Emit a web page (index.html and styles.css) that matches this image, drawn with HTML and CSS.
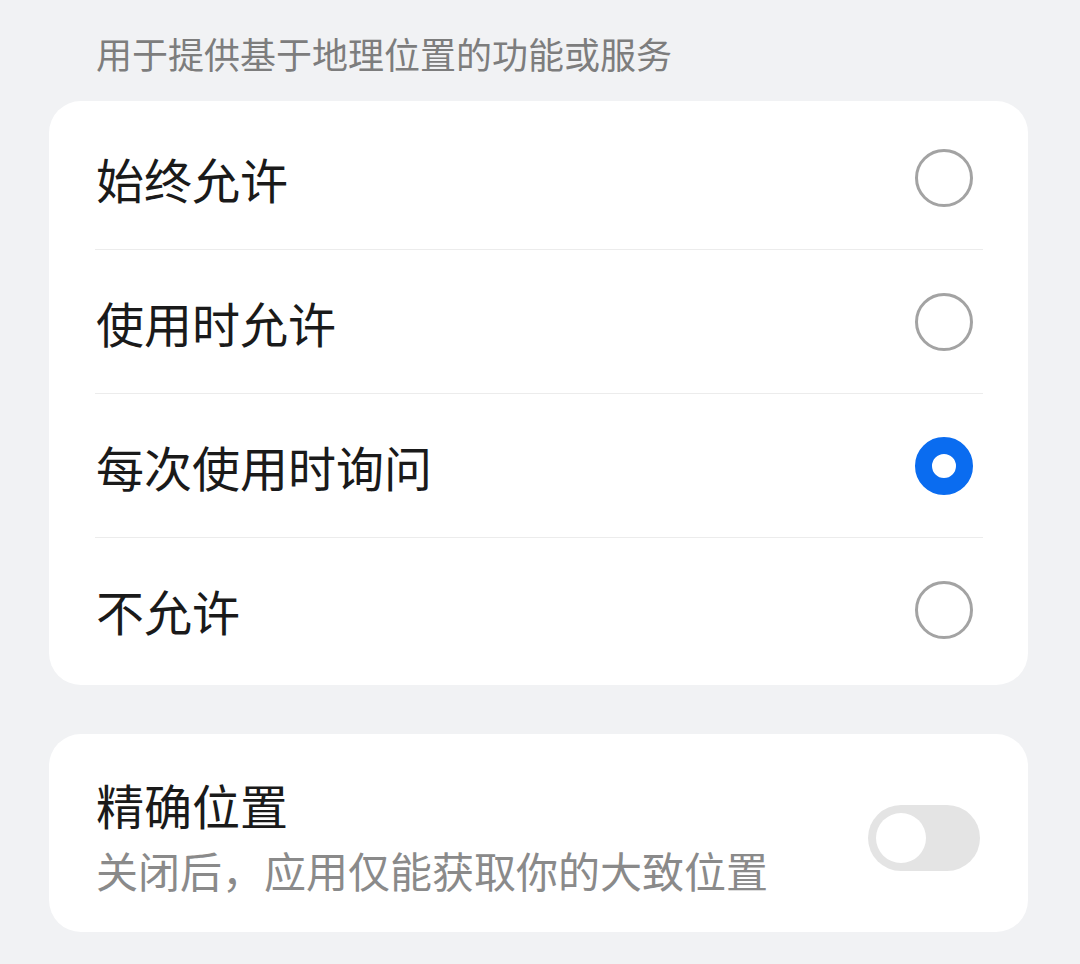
FILE: index.html
```html
<!DOCTYPE html>
<html lang="zh-CN">
<head>
    <meta charset="UTF-8">
    <meta name="viewport" content="width=device-width, initial-scale=1.0">
    <title>位置权限</title>
    <link rel="stylesheet" href="styles.css">
</head>
<body>

    <p class="section-tip">用于提供基于地理位置的功能或服务</p>

    <div class="card options">
        <label class="option">
            <span class="option-text">始终允许</span>
            <span class="radio"></span>
        </label>
        <label class="option">
            <span class="option-text">使用时允许</span>
            <span class="radio"></span>
        </label>
        <label class="option">
            <span class="option-text">每次使用时询问</span>
            <span class="radio checked"></span>
        </label>
        <label class="option">
            <span class="option-text">不允许</span>
            <span class="radio"></span>
        </label>
    </div>

    <div class="card precise">
        <div class="precise-info">
            <div class="precise-title">精确位置</div>
            <div class="precise-desc">关闭后，应用仅能获取你的大致位置</div>
        </div>
        <span class="switch"><span class="knob"></span></span>
    </div>

</body>
</html>
```

FILE: styles.css
```css
* { margin: 0; padding: 0; box-sizing: border-box; }
body { background: #f1f2f4; font-family: "Noto Sans CJK SC", "Noto Sans", sans-serif; color: #1a1a1a; }

.section-tip { padding: 33px 0 0 96px; height: 101px; font-size: 36px; line-height: 40px; color: #7d7d7d; }

.card { margin: 0 52px 0 49px; background: #fff; border-radius: 32px; }

.options { padding: 5px 45px 4px 46px; }
.option { display: flex; align-items: center; justify-content: space-between; height: 144px; border-bottom: 1px solid #ececec; }
.option:last-child { height: 143px; border-bottom: none; }
.option-text { font-size: 48px; line-height: 54px; padding-left: 1px; }

.radio { width: 58px; height: 58px; margin-right: 10px; border: 3px solid #a3a3a3; border-radius: 50%; }
.radio.checked { border: 17px solid #0a6cf0; }

.precise { margin-top: 49px; height: 198px; padding: 43px 48px 34px 46px; display: flex; align-items: center; justify-content: space-between; }
.precise-info { align-self: flex-start; }
.precise-title { font-size: 48px; line-height: 54px; padding-left: 1px; }
.precise-desc { margin-top: 12px; font-size: 42px; line-height: 54px; color: #8a8a8a; padding-left: 1px; }

.switch { display: flex; align-items: center; width: 112px; height: 66px; padding: 0 8px; border-radius: 33px; background: #e4e4e4; }
.knob { width: 50px; height: 50px; border-radius: 50%; background: #fff; }
```
